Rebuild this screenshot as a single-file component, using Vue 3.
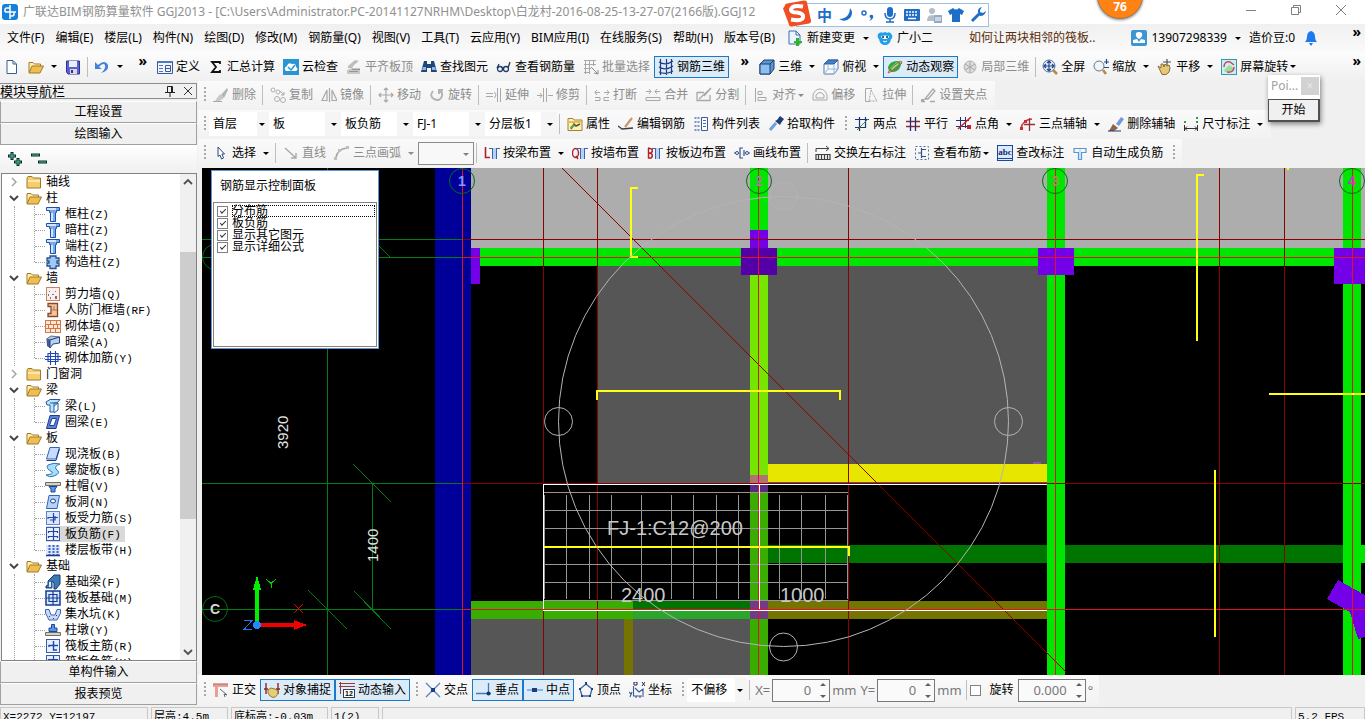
<template>
  <div class="app">
    <header class="titlebar">
      <svg class="icon" viewBox="0 0 16 16" v-html="icons.logo"></svg>
      <span class="title">广联达BIM钢筋算量软件 GGJ2013 - [C:\Users\Administrator.PC-20141127NRHM\Desktop\白龙村-2016-08-25-13-27-07(2166版).GGJ12</span>
      <div class="win-buttons">
        <button v-for="w in windowButtons" :key="w.icon" :aria-label="w.name">
          <svg class="icon" viewBox="0 0 16 16" v-html="icons[w.icon]"></svg>
        </button>
      </div>
    </header>

    <nav class="menubar">
      <div class="menus">
        <button v-for="m in menus" :key="m">{{ m }}</button>
      </div>
      <button class="tool">
        <svg class="icon" viewBox="0 0 16 16" v-html="icons.newChange"></svg>新建变更<i class="caret"></i>
      </button>
      <button class="tool">
        <svg class="icon" viewBox="0 0 16 16" v-html="icons.mascot"></svg>广小二
      </button>
      <a class="tip" href="#">如何让两块相邻的筏板..</a>
      <button class="tool">
        <svg class="icon" viewBox="0 0 16 16" v-html="icons.user"></svg>13907298339<i class="caret"></i>
      </button>
      <button class="tool">造价豆:0</button>
      <button class="tool" aria-label="通知">
        <svg class="icon" viewBox="0 0 16 16" v-html="icons.bell"></svg>
      </button>
      <button class="more last">»</button>
    </nav>

    <div class="toolbar">
      <template v-for="(t, n) in mainTools" :key="n">
        <i v-if="t.type === 'sep'" class="sep"></i>
        <button v-else-if="t.type === 'more'" class="more">»</button>
        <button v-else class="tool" :class="{ on: t.on, off: t.off }" :aria-label="t.name">
          <svg class="icon" viewBox="0 0 16 16" v-html="icons[t.icon]"></svg>
          <span v-if="t.text">{{ t.text }}</span>
          <i v-if="t.caret" class="caret" :class="t.caret"></i>
        </button>
      </template>
      <button class="more last">»</button>
    </div>

    <div class="body">
      <aside class="side">
        <div class="side-title">
          <span>模块导航栏</span>
          <button aria-label="固定"><svg class="icon" viewBox="0 0 16 16" v-html="icons.pin"></svg></button>
          <button aria-label="关闭"><svg class="icon" viewBox="0 0 16 16" v-html="icons.x"></svg></button>
        </div>
        <button class="side-btn">工程设置</button>
        <button class="side-btn">绘图输入</button>
        <div class="side-tools">
          <button aria-label="展开"><svg class="icon" viewBox="0 0 16 16" v-html="icons.expandAll"></svg></button>
          <button aria-label="折叠"><svg class="icon" viewBox="0 0 16 16" v-html="icons.collapseAll"></svg></button>
        </div>
        <div class="tree-box">
          <ul class="tree">
            <li v-for="g in tree" :key="g.name">
              <div class="node">
                <svg class="expander" viewBox="0 0 16 16">
                  <path v-if="g.items" d="M4 6l4 4 4-4" fill="none" stroke="#404040" stroke-width="1.8" />
                  <path v-else d="M6 4l4 4-4 4" fill="none" stroke="#a0a0a0" stroke-width="1.4" />
                </svg>
                <svg class="icon" viewBox="0 0 16 16" v-html="g.items ? icons.folderOpen : icons.folder"></svg>
                <span>{{ g.name }}</span>
              </div>
              <ul v-if="g.items" class="children">
                <li v-for="c in g.items" :key="c[0] + c[1]" class="node" :class="{ selected: c[0] === current }" @click="current = c[0]">
                  <svg class="icon" viewBox="0 0 16 16" v-html="icons[c[2]]"></svg>
                  <span>{{ c[0] }}<span class="key">({{ c[1] }})</span></span>
                </li>
              </ul>
            </li>
          </ul>
          <div class="scrollbar">
            <svg class="icon" viewBox="0 0 16 16"><path d="M4 10l4-4 4 4" fill="none" stroke="#505050" stroke-width="1.8" /></svg>
            <div class="track"><div class="thumb"></div></div>
            <svg class="icon" viewBox="0 0 16 16"><path d="M4 6l4 4 4-4" fill="none" stroke="#505050" stroke-width="1.8" /></svg>
          </div>
        </div>
        <button class="side-btn">单构件输入</button>
        <button class="side-btn">报表预览</button>
      </aside>

      <section class="work">
        <div v-for="(row, r) in rows" :key="r" class="row">
          <div class="strip">
            <template v-for="(t, n) in row" :key="n">
              <i v-if="t.type === 'sep'" class="sep"></i>
              <i v-else-if="t.type === 'grip'" class="grip"></i>
              <label v-else-if="t.type === 'select'" class="combo" :class="t.size">
                <select :aria-label="t.name"><option>{{ t.text }}</option></select>
              </label>
              <button v-else class="tool" :class="{ on: t.on, off: t.off }">
                <svg class="icon" viewBox="0 0 16 16" v-html="icons[t.icon]"></svg>
                <span>{{ t.text }}</span>
                <i v-if="t.caret" class="caret" :class="t.caret"></i>
              </button>
            </template>
          </div>
        </div>

        <div class="canvas">
          <svg class="drawing" viewBox="202 168 1163 507" preserveAspectRatio="xMinYMin slice">
            <rect v-for="(b, n) in blocks" :key="'b' + n" :x="b[0]" :y="b[1]" :width="b[2] - b[0]" :height="b[3] - b[1]" :fill="b[4]" />
            <path d="M1338 580L1365 595V637L1358 639 1350 612 1327 599Z" fill="#7300e6" />
            <!-- axis grid -->
            <path class="axis-green" d="M202 239.500H462M202 257.500H462M202 483.500H462M202 609.500H462M327.500 168V675M372.500 483V609M353 464L391 502M308 590L347 629M354 591L391 629M372 239L391 258" />
            <path class="axis-dark" d="M462 239.500H1365M462 483.500H1365M543.500 168V675M597.500 168V675M848.500 168V675M1219.500 168V675M1284.500 168V675M562 168L1066 672" />
            <path class="axis-red" d="M462 257.500H1365M462 609.500H1365M462.500 168V675M758.500 168V675M1055.500 168V675M1352.500 168V675" />
            <!-- rebar mesh -->
            <path d="M544 492.500H848" stroke="#a58c8c" />
            <path :d="meshPath" stroke="#969696" fill="none" />
            <path d="M543.500 609V484.500H1047M543 610.500H1047M759.500 484V609" stroke="#fff" fill="none" />
            <path class="rebar" d="M638 188H631V257H638M597 400V391H840V400M1204 175H1197V341M1269 394H1365M1215 470V637M544 547H849V556M1288 168V170" />
            <!-- orbit control -->
            <g class="orbit">
              <circle cx="783.500" cy="421.500" r="225" />
              <circle cx="783.500" cy="196" r="14" />
              <circle cx="783.500" cy="647" r="14" />
              <circle cx="558.500" cy="421.500" r="14" />
              <circle cx="1008.500" cy="421.500" r="14" />
            </g>
            <g class="bubble">
              <circle v-for="b in bubbles" :key="b.x + '-' + b.y" :cx="b.x" :cy="b.y" r="12.500" />
            </g>
            <text v-for="b in bubbles" :key="'t' + b.x + '-' + b.y" class="bubble-text" :x="b.x" :y="b.y + 5" :fill="b.fill">{{ b.text }}</text>
            <g class="cad-text">
              <text x="607" y="535">FJ-1:C12@200</text>
              <text x="621" y="602">2400</text>
              <text x="780" y="602">1000</text>
              <text class="dim" transform="translate(288 449) rotate(-90)">3920</text>
              <text class="dim" transform="translate(378 562) rotate(-90)">1400</text>
            </g>
            <!-- coordinate axes -->
            <path d="M255 622V590H253L257 575 261 590H259V622Z" fill="#00f000" />
            <path d="M260 623H294V620L307 625 294 630V627H260Z" fill="#f00000" />
            <circle cx="257" cy="625" r="4" fill="#1e8cff" />
            <path d="M266 579L271 583.500 276 579M271 583.500V588" stroke="#00d000" fill="none" />
            <path d="M294 604L303 613M303 604L294 613" stroke="#f00000" />
            <path d="M244 620.500H252L244 629.500H252" stroke="#1e78f0" fill="none" />
          </svg>

          <div class="rebar-panel">
            <h2>钢筋显示控制面板</h2>
            <div class="checks">
              <label v-for="c in checks" :key="c.text" :class="{ focus: c.focus }">
                <input v-model="c.value" type="checkbox" /><span>{{ c.text }}</span>
              </label>
            </div>
          </div>
        </div>

        <div class="row snap">
          <div class="strip">
            <template v-for="(t, n) in snaps" :key="n">
              <i v-if="t.type === 'grip'" class="grip"></i>
              <button v-else class="tool" :class="{ on: t.on }">
                <svg class="icon" viewBox="0 0 16 16" v-html="icons[t.icon]"></svg>
                <span>{{ t.text }}</span>
              </button>
            </template>
            <i class="grip"></i>
            <label class="combo small"><select aria-label="偏移方式"><option>不偏移</option></select></label>
            <i class="sep"></i>
            <label class="num"><span>X=</span><input v-model="offsetX" type="text" /><i class="spin"></i><span>mm</span></label>
            <label class="num"><span>Y=</span><input v-model="offsetY" type="text" /><i class="spin"></i><span>mm</span></label>
            <i class="sep"></i>
            <label class="rotate"><input v-model="rotate" type="checkbox" />旋转</label>
            <label class="num wide"><input v-model="angle" type="text" aria-label="旋转角度" /><i class="spin"></i><span>°</span></label>
          </div>
        </div>
      </section>
    </div>

    <footer class="status">
      <span class="c1">X=2272 Y=12197</span>
      <span class="c2">层高:4.5m</span>
      <span class="c3">底标高:-0.03m</span>
      <span class="c4">1(2)</span>
      <span class="fill"></span>
      <span class="c3">5.2 FPS</span>
    </footer>

    <!-- input method bar -->
    <div class="ime">
      <svg class="sogou" viewBox="0 0 28 26">
        <path d="M2 5Q2 3 4 3L21 0Q24 0 24 2L28 20Q28 23 26 23L9 26Q6 26 6 24L0 8Z" fill="#f04e23" />
        <path d="M20 6Q9 4 8 9Q8 12 14 12Q21 13 20 17Q19 21 8 19" fill="none" stroke="#fff" stroke-width="4" />
      </svg>
      <span class="zh">中</span>
      <svg v-for="i in imeIcons" :key="i" class="icon" viewBox="0 0 16 16" v-html="icons[i]"></svg>
    </div>
    <div class="ball">76</div>
    <div class="poi">
      <div class="poi-title"><span>Poi...</span><button aria-label="关闭">×</button></div>
      <button class="poi-btn">开始</button>
    </div>
  </div>
</template>

<script setup>
import { ref } from 'vue'

const current = ref('板负筋')
const offsetX = ref('0')
const offsetY = ref('0')
const angle = ref('0.000')
const rotate = ref(false)

const menus = ['文件(F)', '编辑(E)', '楼层(L)', '构件(N)', '绘图(D)', '修改(M)', '钢筋量(Q)', '视图(V)', '工具(T)', '云应用(Y)', 'BIM应用(I)', '在线服务(S)', '帮助(H)', '版本号(B)']

const windowButtons = [
  { icon: 'min', name: '最小化' },
  { icon: 'restore', name: '还原' },
  { icon: 'x2', name: '关闭' }
]

const imeIcons = ['moon', 'punct', 'mic', 'keyboard', 'people', 'shirt', 'wrench']

const sep = { type: 'sep' }
const grip = { type: 'grip' }

const mainTools = [
  { icon: 'file', name: '新建' },
  { icon: 'folderOpen', name: '打开', caret: 'normal' },
  { icon: 'save', name: '保存' },
  sep,
  { icon: 'undo', name: '撤销', caret: 'normal' },
  { type: 'more' },
  { icon: 'define', text: '定义' },
  { icon: 'sigma', text: '汇总计算' },
  { icon: 'cloud', text: '云检查' },
  { icon: 'alignTop', text: '平齐板顶', off: true },
  { icon: 'binocular', text: '查找图元' },
  { icon: 'glasses', text: '查看钢筋量' },
  { icon: 'batch', text: '批量选择', off: true },
  { icon: 'mesh', text: '钢筋三维', on: true },
  { type: 'more' },
  { icon: 'cube', text: '三维', caret: 'normal' },
  { icon: 'cubeTop', text: '俯视', caret: 'normal' },
  { icon: 'orbit', text: '动态观察', on: true },
  { icon: 'local3d', text: '局部三维', off: true },
  sep,
  { icon: 'full', text: '全屏' },
  { icon: 'zoom', text: '缩放', caret: 'normal' },
  { icon: 'pan', text: '平移', caret: 'normal' },
  { icon: 'screenRotate', text: '屏幕旋转', caret: 'tight' }
]

const rows = [
  [
    grip,
    { icon: 'erase', text: '删除', off: true }, sep,
    { icon: 'copy', text: '复制', off: true },
    { icon: 'mirror', text: '镜像', off: true }, sep,
    { icon: 'move', text: '移动', off: true },
    { icon: 'rotate', text: '旋转', off: true }, sep,
    { icon: 'extend', text: '延伸', off: true },
    { icon: 'trim', text: '修剪', off: true }, sep,
    { icon: 'break', text: '打断', off: true },
    { icon: 'merge', text: '合并', off: true },
    { icon: 'split', text: '分割', off: true }, sep,
    { icon: 'align', text: '对齐', off: true, caret: 'tight' },
    { icon: 'offset', text: '偏移', off: true },
    { icon: 'stretch', text: '拉伸', off: true }, sep,
    { icon: 'gripPoint', text: '设置夹点', off: true }
  ],
  [
    grip,
    { type: 'select', text: '首层', name: '楼层', size: 'small' },
    { type: 'select', text: '板', name: '构件类型' },
    { type: 'select', text: '板负筋', name: '构件' },
    { type: 'select', text: 'FJ-1', name: '构件名称' },
    { type: 'select', text: '分层板1', name: '分层' },
    sep,
    { icon: 'props', text: '属性' },
    { icon: 'editBar', text: '编辑钢筋' },
    { icon: 'list', text: '构件列表' },
    { icon: 'picker', text: '拾取构件' },
    grip,
    { icon: 'twoPoint', text: '两点' },
    { icon: 'parallel', text: '平行' },
    { icon: 'pointAngle', text: '点角', caret: 'normal' },
    { icon: 'threeAxis', text: '三点辅轴', caret: 'normal' },
    { icon: 'delAxis', text: '删除辅轴' },
    { icon: 'dimension', text: '尺寸标注', caret: 'normal' }
  ],
  [
    grip,
    { icon: 'cursor', text: '选择', caret: 'normal' }, sep,
    { icon: 'line', text: '直线', off: true },
    { icon: 'arc', text: '三点画弧', off: true, caret: 'normal' },
    { type: 'select', text: '', name: '参数', size: 'boxed' }, sep,
    { icon: 'byBeam', text: '按梁布置', caret: 'normal' },
    { icon: 'byWall', text: '按墙布置' },
    { icon: 'bySlab', text: '按板边布置' },
    { icon: 'byLine', text: '画线布置' }, sep,
    { icon: 'swap', text: '交换左右标注' },
    { icon: 'viewBar', text: '查看布筋', caret: 'tight' },
    { icon: 'abc', text: '查改标注' },
    { icon: 'auto', text: '自动生成负筋' },
    grip
  ]
]

const snaps = [
  grip,
  { icon: 'ortho', text: '正交' },
  { icon: 'osnap', text: '对象捕捉', on: true },
  { icon: 'dyn', text: '动态输入', on: true },
  grip,
  { icon: 'cross', text: '交点' },
  { icon: 'perp', text: '垂点', on: true },
  { icon: 'mid', text: '中点', on: true },
  { icon: 'vertex', text: '顶点' },
  { icon: 'coord', text: '坐标' }
]

const tree = [
  { name: '轴线' },
  { name: '柱', items: [['框柱', 'Z', 'column'], ['暗柱', 'Z', 'column'], ['端柱', 'Z', 'column'], ['构造柱', 'Z', 'gzColumn']] },
  { name: '墙', items: [['剪力墙', 'Q', 'shearWall'], ['人防门框墙', 'RF', 'doorWall'], ['砌体墙', 'Q', 'brick'], ['暗梁', 'A', 'hiddenBeam'], ['砌体加筋', 'Y', 'wallBar']] },
  { name: '门窗洞' },
  { name: '梁', items: [['梁', 'L', 'beam'], ['圈梁', 'E', 'ringBeam']] },
  { name: '板', items: [['现浇板', 'B', 'slab'], ['螺旋板', 'B', 'spiral'], ['柱帽', 'V', 'cap'], ['板洞', 'N', 'hole'], ['板受力筋', 'S', 'slabBar'], ['板负筋', 'F', 'negBar'], ['楼层板带', 'H', 'band']] },
  { name: '基础', items: [['基础梁', 'F', 'baseBeam'], ['筏板基础', 'M', 'raft'], ['集水坑', 'K', 'pit'], ['柱墩', 'Y', 'pier'], ['筏板主筋', 'R', 'raftBar'], ['筏板负筋', 'X', 'negBar']] }
]

const checks = ref([
  { text: '分布筋', value: true, focus: true },
  { text: '板负筋', value: true },
  { text: '显示其它图元', value: true },
  { text: '显示详细公式', value: true }
])

// x1, y1, x2, y2, colour
const blocks = [
  [435, 168, 471, 675, '#000098'],
  [471, 168, 1365, 248, '#adadad'],
  [598, 266, 1047, 484, '#565656'],
  [471, 619, 750, 675, '#565656'],
  [471, 248, 1365, 266, '#00e600'],
  [471, 248, 480, 284, '#7300e6'],
  [768, 464, 1047, 482, '#e6e600'],
  [768, 545, 1365, 563, '#007400'],
  [1361, 545, 1365, 563, '#00e600'],
  [471, 601, 633, 619, '#3aae00'],
  [633, 601, 750, 610, '#007400'],
  [633, 610, 750, 619, '#2ca52c'],
  [624, 619, 633, 675, '#757400'],
  [768, 601, 1047, 619, '#757400'],
  [750, 168, 768, 248, '#00e600'],
  [750, 275, 768, 475, '#74e600'],
  [750, 475, 768, 483, '#b07272'],
  [750, 483, 768, 492, '#5a2a85'],
  [750, 492, 768, 675, '#3aae00'],
  [750, 601, 768, 619, '#733a85'],
  [750, 230, 768, 248, '#7300e6'],
  [741, 248, 777, 275, '#5500a6'],
  [1033, 462, 1041, 464, '#9050b0'],
  [1047, 168, 1065, 675, '#00e600'],
  [1343, 168, 1361, 675, '#00e600'],
  [1038, 248, 1074, 275, '#7300e6'],
  [1334, 248, 1365, 284, '#7300e6']
]

const meshPath =
  [510, 528, 564, 582, 600].map((y) => `M544 ${y + 0.5}H848`).join('') +
  [544, 566, 589, 611, 641, 671, 693, 716, 738, 779, 801, 825, 847].map((x) => `M${x + 0.5} 495V599`).join('')

const bubbles = [
  { x: 215, y: 609, text: 'C', fill: '#d8d8d8' },
  { x: 215, y: 257, text: '', fill: '#fff' },
  { x: 462, y: 181, text: '1', fill: '#8c96ff' },
  { x: 759, y: 181, text: '2', fill: '#8c8c8c' },
  { x: 1055, y: 181, text: '3', fill: '#a08c5a' },
  { x: 1352, y: 181, text: '4', fill: '#c83cb4' }
]

const stroke = (d, color = '#1e4696', w = 1) => `<path d="${d}" fill="none" stroke="${color}" stroke-width="${w}"/>`
const fill = (d, color) => `<path d="${d}" fill="${color}"/>`
const gray = '#a8a8a8'
const barT = stroke('M5 3.500H16M8.500 3V14M12.500 3V14', '#3c64aa') + fill('M9 3h3v11H9z', '#b4d2f5')

const icons = {
  logo: '<rect width="16" height="16" rx="3" fill="#1482dc"/>' + stroke('M8 1V15M3 8H14M8 4H5Q3 4 3 6V8M8 12H10Q12 12 12 10V8', '#fff', 1.5),
  min: stroke('M3 8.500H13', '#808080'),
  restore: stroke('M3.500 5.500H10.500V12.500H3.500ZM5.500 5V3.500H12.500V10.500H11', '#808080'),
  x2: stroke('M3 3L13 13M13 3L3 13', '#808080'),
  x: stroke('M4 4L12 12M12 4L4 12', '#303030'),
  pin: stroke('M5.500 3.500H10.500V9.500H5.500ZM3 9.500H13M8 10V14', '#202020') + fill('M9 4h1v5H9z', '#202020'),
  newChange: '<path d="M2 1H9L13 5V14H2Z" fill="#e8f4ff" stroke="#3c6eaa"/>' + stroke('M9 1V5H13', '#3c6eaa') + fill('M9 8h3v3h3v2h-3v3H9v-3H7v-2h2z', '#32b428'),
  mascot: '<path d="M1 4Q4 1 6 3Q8 1 10 3Q13 1 15 5Q16 8 14 9Q13 15 8 15Q3 15 2 9Q0 8 1 4Z" fill="#1ea0eb"/><path d="M4 6Q8 5 12 6Q12 9 8 9Q4 9 4 6Z" fill="#fff"/><circle cx="6" cy="7" r="1" fill="#123"/><circle cx="10" cy="7" r="1" fill="#123"/>' + stroke('M6 11Q8 13 10 11', '#fff'),
  user: '<rect width="16" height="16" rx="2" fill="#3c96d2"/>' + fill('M5 3Q8 1 11 3Q12 7 8 9Q4 7 5 3ZM2 10L6 9 8 12 10 9 14 10V13H2Z', '#fff'),
  bell: fill('M8 1Q12 2 12 7Q12 10 14 12H2Q4 10 4 7Q4 2 8 1ZM6 13H10L8 16Z', '#1e78f0'),
  file: '<path d="M3 1.500H9L12.500 5V14.500H3Z" fill="#fff" stroke="#3c5a96"/>' + stroke('M9 2V5H12', '#3c5a96'),
  folder: '<path d="M1 4L2 2.500H6L7.500 4H14.500V14H1Z" fill="#f5cd6e" stroke="#a0782d"/>' + fill('M2 6h12v2H2z', '#ffe9a8'),
  folderOpen: '<path d="M1 13.500V3.500H5L6.500 5H12.500V7" fill="#fff0a0" stroke="#a0782d"/><path d="M1 14L4 7H15.500L12 14Z" fill="#f0be50" stroke="#a0782d"/>',
  save: '<path d="M1.500 2H14.500V15H3L1.500 13Z" fill="#5a5fd2" stroke="#32328c"/><path d="M4 2h8v6H4z" fill="#e6f0ff"/><path d="M5 10h7v5H5z" fill="#d8d8e8"/>' + fill('M6 11h2v3H6z', '#32328c'),
  undo: fill('M1 3V10H8L5 8Q9 3 11 6Q12 10 7 14Q15 12 14 6Q11 0 4 6Z', '#4182dc'),
  define: '<path d="M.5 2.500H15.500V14.500H.5Z" fill="#f0f5ff" stroke="#3c5a96"/>' + fill('M1 2h14v2H1z', '#5078be') + stroke('M2 6.500H6M2 9.500H6M2 12.500H6', '#5078be') + stroke('M8.500 6.500H13.500V12.500H8.500ZM9 9.500H13', '#3c5a96'),
  sigma: stroke('M12 5V3H4L8 8 4 13H12V11', '#111', 1.8),
  cloud: '<rect width="16" height="16" fill="#2896d2"/>' + fill('M3 12Q0 9 4 7Q5 3 9 5Q13 4 13 8Q16 10 13 12Z', '#fff') + stroke('M5 8L8 11 12 6', '#2896d2', 1.5),
  alignTop: fill('M2 7L9 1 13 2 8 6 6 9H2Z', '#bebebe') + fill('M1 11L6 9H14V15H1Z', '#c8c8c8') + stroke('M3 12.500H12M6 10.500H14', '#969696'),
  binocular: fill('M3 2H6V5H10V2H13L16 13H10V9H6V13H0Z', '#1e4678') + fill('M2 8h3v3H1zM11 8h3l1 3h-4z', '#8cb4e6'),
  glasses: '<circle cx="4" cy="10" r="2.500" fill="none" stroke="#1e3c6e" stroke-width="1.300"/><circle cx="10" cy="10" r="2.500" fill="none" stroke="#1e3c6e" stroke-width="1.300"/>' + stroke('M6 9H8M12 9L14 3M1 9L3 5', '#1e3c6e', 1.3),
  batch: stroke('M1 1.500H13M1 5.500H13M1 9.500H8M1 13.500H7M2.500 1V15M6.500 1V15M10.500 1V7', gray) + stroke('M8 8L15 15M11 14L15 15V11', '#8c8c8c'),
  mesh: stroke('M1 3Q8 7 15 2M1 8Q8 12 15 7M1 13Q8 16 15 12M2.500 0V16M8.500 0V16M13.500 0V15', '#1e3c82', 1.2),
  cube: '<path d="M1 5L5 1H15V10L11 15H1Z" fill="#5a96d2" stroke="#1e3c6e"/><path d="M1 5H11V15H1Z" fill="#8cbef0" stroke="#1e3c6e"/>' + stroke('M11 5L15 1', '#1e3c6e'),
  cubeTop: '<path d="M1 5L5 1H15V10L11 15H1Z" fill="#f5faff" stroke="#5a78aa"/><path d="M1 5L5 1H15L11 5Z" fill="#3c82d2" stroke="#3c5a8c"/>' + stroke('M11 5V15M1 15L5 10H15M5 5V10', '#96b4dc'),
  orbit: '<path d="M1 8Q3 2 10 2Q14 2 14 6Q12 13 6 13Q1 13 1 8Z" fill="#28aa46"/><path d="M3 9L10 3 12 5 5 11Z" fill="#8ce682"/>' + stroke('M1 14Q3 8 14 2L15 4Q9 12 1 14', '#d2503c', 1),
  local3d: '<circle cx="8" cy="8" r="6" fill="#dcdcdc" stroke="#b4b4b4"/>' + stroke('M3 5L13 11M13 5L3 11M8 2V14', '#a8a8a8'),
  full: '<circle cx="7" cy="7" r="6" fill="#e6f0fa" stroke="#5a7396"/>' + stroke('M7 2V12M2 7H12M5 4L7 2 9 4M5 10L7 12 9 10M4 5L2 7 4 9M10 5L12 7 10 9', '#1e468c', 1.2) + stroke('M11 11L15 15', '#b48c3c', 2.5),
  zoom: '<circle cx="6" cy="7" r="5" fill="#f0f5fa" stroke="#64788c"/>' + stroke('M10 11L13 15', '#b48c3c', 2.5) + stroke('M11 3H16M13.500 0V5M11 8.500H16', '#1e468c', 1.2),
  pan: stroke('M10 0V7M6 3H14', '#46505a', 1.2) + '<path d="M1 7L4 9 4 5 6 5 7 8 8 5 10 7 12 6 13 9Q13 14 9 15.500H5Z" fill="#e6c878" stroke="#8c6e32"/>',
  screenRotate: '<rect x=".5" y=".5" width="15" height="15" fill="#c8f0f5" stroke="#3c96aa"/><path d="M3 11L8 6 13 9 11 13H4Z" fill="#a0dc96"/>' + stroke('M3 8Q3 2 9 3L13 6M13 8Q13 14 6 13', '#d24664', 1.5),
  erase: fill('M8 8L14 1 15 3 11 11Z', '#b4b4b4') + fill('M7 7L11 11 6 14H2Z', '#c8c8c8') + stroke('M0 14.500H9', gray),
  copy: '<g fill="none" stroke="#b0b0b0"><circle cx="3" cy="3" r="2"/><circle cx="8" cy="5" r="2"/><circle cx="7" cy="12" r="2.500"/><circle cx="13" cy="13" r="2.500"/></g>' + stroke('M10 4L14 8M14 5V8H11', gray),
  mirror: stroke('M1 13.500L6 3V13.500ZM8.500 1V15M11 13.500V3L16 13.500Z', gray, 1.2),
  move: stroke('M8 1V15M1 8H15M6 3L8 1 10 3M6 13L8 15 10 13M3 6L1 8 3 10M13 6L15 8 13 10', gray, 1.2),
  rotate: stroke('M4 4Q0 9 5 12Q11 15 13 9Q14 5 10 3M10 7V3H14', '#b4b4b4', 2),
  extend: stroke('M0 6.500H7M0 9.500H7M8.500 5L10 8 8.500 11', gray) + stroke('M11.500 1V15M14.500 1V15', gray),
  trim: stroke('M0 8.500H5M11 8.500H16M3 6L5 8.500 3 11M6.500 1V15M9.500 1V15', gray),
  break: stroke('M1 5.500H6M10 5.500H15M3 3L1 5.500 3 8M13 3L15 5.500 13 8M1 10.500H6V13.500H1M15 10.500H10V13.500H15', gray),
  merge: stroke('M1 4.500H6M10 4.500H15M4 2L6 4.500 4 7M12 2L10 4.500 12 7M1 10.500H15V13.500H1Z', gray),
  split: stroke('M1 5.500H8M1 5V13.500H14V8M3 12L14 2M8 9L15 1', gray, 1.3),
  align: stroke('M2.500 1V15M5 4.500H9V7.500H5ZM5 10.500H13V13.500H5Z', gray),
  offset: stroke('M1 13V8Q3 2 8 2Q13 2 15 8V13ZM4 11V8Q8 3 12 8V11Z', gray),
  stretch: stroke('M9 1.500H2.500V14.500H7', gray) + '<path d="M8 3L14 14H6Z" fill="none" stroke="#a8a8a8" stroke-dasharray="2 1"/>',
  gripPoint: stroke('M1 14.500H5M10 14.500H15M5 12L13 2 15 4 8 12Z', gray, 1.3) + fill('M1 12h3v3H1z', gray),
  props: '<path d="M1 2.500H6L7 4H15V14.500H1Z" fill="#fff0b4" stroke="#a0823c"/>' + fill('M1 5h14v2H1z', '#e6be50') + stroke('M4 13L7 8 9 10 13 8', '#50503c', 1.5) + fill('M3 11l4-3 1 2-4 3z', '#64a050'),
  editBar: stroke('M0 10L4 13 15 12', '#323c50', 1.3) + stroke('M7 11L14 2', '#c8966e', 2.2),
  list: '<path d="M2.500 1V15M5.500 1V15" stroke="#7896c8" stroke-width="2" stroke-dasharray="2 2"/><path d="M8.500 1.500H14.500V14.500H8.500Z" fill="#fff" stroke="#3c5a96"/>' + stroke('M10 4.500H13M10 7.500H13M10 10.500H13', '#3c6ebe'),
  picker: stroke('M2 14L8 7', '#6ea0dc', 3) + fill('M7 5L9 4 12 0 16 3 13 7 12 9Z', '#1e3c78'),
  twoPoint: stroke('M1 3.500H15M1 11.500H12M5.500 1V15M11.500 1V12', '#1e3278', 1.2) + stroke('M3 14L14 3', '#329632'),
  parallel: stroke('M1 5.500H15M1 10.500H15', '#962832', 1.3) + stroke('M5.500 1V15M10.500 1V15', '#1e3278', 1.3),
  pointAngle: stroke('M0 4.500H13M0 10.500H11M4.500 1V14M9.500 1V12', '#1e3278') + stroke('M2 13L15 1', '#c81e28', 1.4) + fill('M11 9h4v4h-4z', '#c81e28'),
  threeAxis: stroke('M1 13Q2 4 12 3', '#c83c3c', 1.5) + stroke('M4 8.500H15M9.500 2V15', '#96323c', 1.3) + fill('M0 11h3v3H0zM4 4h3v3H4z', '#d2282d'),
  delAxis: fill('M8 8L13 1 16 3 11 10Z', '#7896dc') + fill('M5 8L10 12 6 15H1Z', '#8c6446') + stroke('M0 15H13', '#1e3278'),
  dimension: stroke('M1.500 9V15M14.500 9V15M2 12.500H14M4 10.500L2 12.500 4 14.500M12 10.500L14 12.500 12 14.500', '#323232') + fill('M1 5h2v2H1zM13 1h2v2h-2zM13 5h2v2h-2z', '#32a046'),
  cursor: '<path d="M5 2L11.500 9H9L10.500 13 8.500 14 7 10 5 11.500Z" fill="#fff" stroke="#32467d"/>',
  line: stroke('M2 3L13 13M8 13H13V8', gray, 1.4),
  arc: stroke('M2 13Q3 4 13 3', gray, 1.6) + fill('M0 12h3v3H0zM4 4h3v3H4zM12 1h3v3h-3z', '#bebebe'),
  byBeam: stroke('M1.500 2V12.500H6', '#b41e28', 1.6) + barT,
  byWall: '<ellipse cx="3.500" cy="8" rx="3" ry="4.500" fill="none" stroke="#b41e28" stroke-width="1.400"/>' + stroke('M4 11L6 14', '#b41e28', 1.4) + barT,
  bySlab: stroke('M1.500 3V13H4Q6 12 5 9L2 8H4Q6 7 5 4L1 3', '#b41e28', 1.4) + barT,
  byLine: stroke('M0 8H5M11 8H16M8 3H6V13H8M8 3H9M10 5V11M8 13H9', '#32508c', 1.2) + '<circle cx="3" cy="8" r="1.500" fill="#fff" stroke="#32508c"/><circle cx="13" cy="8" r="1.500" fill="#fff" stroke="#32508c"/>',
  swap: stroke('M1 7V3.500H13M11 1L14 3.500 11 6', '#404040') + stroke('M1 9.500H15V14.500H1ZM3.500 10V14M6.500 10V14M9.500 10V14M12.500 10V14', '#404040', 1.2),
  viewBar: '<path d="M1.500 1.500H14.500V14.500H1.500Z" fill="none" stroke="#506ea0" stroke-dasharray="2 2"/>' + stroke('M4 8H7M7.500 3V13M7 4.500H12M7 11.500H12', '#32508c', 1.2),
  abc: '<rect x=".5" y=".5" width="15" height="15" fill="#dceaff" stroke="#1e46a0"/><text x="8" y="10" font-size="9" font-family="Liberation Serif" font-weight="bold" fill="#142864" text-anchor="middle">abc</text>' + stroke('M1 13.500H15', '#1e46a0'),
  auto: stroke('M2 3.500H14M2 3V7.500H6.500V14.500H9.500V7.500H14V3', '#5a96d2', 1.2) + fill('M7 4h2v10H7z', '#c8e1ff'),
  ortho: fill('M0 2H15V5H5V15H2V5H0Z', '#e6a096') + '<path d="M7 7L14 13 11 12 12 15" fill="#fff" stroke="#5a6478"/>' + stroke('M0 2H15', '#b45a50'),
  osnap: stroke('M2 1V12M14 1V12M0 7H4M12 7H16', '#8c2828', 1.4) + '<path d="M4 8L7 6 11 7 14 9Q14 15 9 15.500Q6 15 4 11Z" fill="#e6cd78" stroke="#967832"/>',
  dyn: stroke('M0 1.500H16M0 4.500H16M1.500 0V12', '#963c3c') + '<rect x="4.500" y="7.500" width="11" height="8" fill="#fff" stroke="#323c50"/><text x="10" y="14" font-size="7" font-weight="bold" font-family="Liberation Sans" fill="#000" text-anchor="middle">12</text>',
  cross: stroke('M1 1L15 15M15 1L1 15', '#5a82be', 1.3) + fill('M6 6h4v4H6z', '#1e3c8c'),
  perp: stroke('M0 11.500H15M12.500 1V12', '#3c78c8', 1.3) + '<circle cx="12.500" cy="11.500" r="2" fill="#1e3264"/>',
  mid: stroke('M0 8H16', '#5a96dc', 1.3) + fill('M5 6h5v4H5z', '#1e3c78'),
  vertex: '<path d="M8 2L14 7 12 14H4L2 7Z" fill="none" stroke="#3c64aa" stroke-width="1.300"/>' + fill('M7 0h2v3H7zM13 6h2v2h-2zM1 6h2v2H1zM3 13h2v2H3zM11 13h2v2h-2z', '#1e3c8c'),
  coord: stroke('M4.500 4V14H15M6 6L10 10 14 7V13M0 10L2 12M3 10L1 15M7 14V16M11 14V16', '#3c5a96', 1.1) + stroke('M5 0H8V3H5ZM13 0L16 4M16 0L13 4', '#1e2850'),
  expandAll: stroke('M1 5H9M5 1V9M7 11H15M11 7V15', '#0a2828', 3) + stroke('M2 5H8M5 2V8M8 11H14M11 8V14', '#50c8a0', 1),
  collapseAll: stroke('M0 4H9M7 11H16', '#0a2828', 3) + stroke('M1 4H8M8 11H15', '#50c8a0', 1),
  column: '<path d="M1.500 1.500H14.500V4.500H11.500V6.500H10.500V15.500H5.500V6.500H4.500V4.500H1.500Z" fill="#78aaeb" stroke="#1e50aa"/>' + fill('M2 2h9v2H2zM6 7h2v8H6z', '#d2e6ff'),
  gzColumn: '<path d="M5 2H11V4H14V7H12V9H14V12H11V14.500H5V12H2V9H4V7H2V4H5Z" fill="#a0c8f5" stroke="#28508c" stroke-width="1.300"/>',
  shearWall: '<rect x="1.500" y="1.500" width="13" height="13" fill="#faf0eb" stroke="#c88264"/>' + fill('M4 5h1v1H4zM7 8h2v1H7zM10 5h1v1h-1zM5 11h1v2H5zM10 10h2v3h-2zM3 8h1v2H3z', '#786e96'),
  doorWall: '<path d="M3 1.500H12.500V14.500H3V11.500H6V4.500H3Z" fill="#f0c8a0" stroke="#8c4628" stroke-width="1.300"/>' + stroke('M6 8H12M9 4V8', '#b46e46'),
  brick: '<rect x=".5" y="2.500" width="15" height="12" fill="#ffe6d7" stroke="#d27846"/>' + stroke('M1 6.500H15M1 10.500H15M5.500 3V6M11.500 3V6M3.500 7V10M8.500 7V10M12.500 7V10M5.500 11V14M10.500 11V14', '#d27846'),
  hiddenBeam: '<path d="M1.500 5L6 2 14.500 3 6 6Z" fill="#b4c8e6" stroke="#5a6e8c"/><path d="M1.500 5L5 6V14L2 12Z" fill="#3c5a96"/><path d="M5 6L14.500 3V9L8 10 5 14Z" fill="#b4d2f5" stroke="#28467d"/>',
  wallBar: stroke('M3 3.500H13V11.500H3ZM0 6.500H16M0 9.500H16M5.500 1V15M10.500 1V15', '#1e46b4', 1.1),
  beam: '<path d="M1 4L5 1.500H15L12 5H9V14H5V7H2Z" fill="#b4e6ff" stroke="#285aa0"/>' + stroke('M9 8L13 5V12L9 15M5 5H12', '#285aa0'),
  ringBeam: '<path d="M5 1.500H14.500L11 14.500H1.500Z" fill="#5a82dc" stroke="#1e3c96"/><path d="M7 4.500H11.500L9 11.500H4.500Z" fill="#fff" stroke="#1e3c96"/>',
  slab: '<path d="M5 1.500H14.500L11 13H1.500Z" fill="#c8dcff" stroke="#3264b4"/>' + stroke('M1.500 14.500H11L14.500 3', '#1e3c8c'),
  spiral: '<path d="M3 3Q9 0 15 2Q9 4 11 7Q17 11 9 14Q4 16 1 13Q9 12 7 10Q0 6 3 3Z" fill="#aadcfa" stroke="#2878b4"/>',
  cap: '<path d="M.5 4.500H15.500V7.500H.5Z" fill="#d2d2c8" stroke="#6e6e64"/><path d="M4 8.500H12L10 11V14H6V11Z" fill="#5a96e6" stroke="#1e4696"/>',
  hole: '<path d="M4 1.500H14.500L12 14.500H1.500Z" fill="#b4d2fa" stroke="#3264b4"/><ellipse cx="8" cy="7" rx="2.500" ry="2" fill="#fff" stroke="#1e3c8c"/>',
  slabBar: '<rect x="1.500" y="1.500" width="13" height="13" fill="#dce6ff" stroke="#6482c8"/>' + stroke('M3 9V7.500H13M8.500 3V13M5 10H10V6', '#1e46b4', 1.2),
  negBar: '<rect x="1.500" y="1.500" width="13" height="13" fill="#e6f0ff" stroke="#3c5aaa"/>' + stroke('M3 5.500H13M3 10.500H13M8.500 2V14M3.500 5V7M12.500 5V7M3.500 10V12M12.500 10V12', '#1e46aa', 1.2),
  band: fill('M1 3h14v10H1z', '#dce6ff') + '<path d="M4.500 3V13M8.500 3V13M12.500 3V13" stroke="#3c64c8" stroke-width="2" stroke-dasharray="2 1"/>' + stroke('M1 13.500H15', '#1e3c8c', 1.6),
  baseBeam: '<path d="M3 7L9 1H15V10L11 15H9V9L7 7V14H1V12L3 11Z" fill="#3c78b4" stroke="#143c6e"/>' + fill('M4 8h2v5H4z', '#dcebff'),
  raft: '<rect x="1" y="1" width="14" height="14" fill="#dceaff" stroke="#143c96" stroke-width="1.500"/>' + stroke('M4 4.500H12V11.500H4ZM1 8H15M8 1V15', '#143c96', 1.2),
  pit: '<path d="M.5 3.500H4L6 9H10L12 3.500H15.500V7L12 14H4L.5 7Z" fill="#c8dcfa" stroke="#3c64b4"/>' + fill('M4 10h1v1H4zM8 12h1v1H8zM11 9h1v1h-1z', '#1e3c8c'),
  pier: '<path d="M.5 10.500H15.500V13.500H.5Z" fill="#d2d2c8" stroke="#6e6e64"/><path d="M6.500 2.500H9.500V6H12V9.500H4V6H6.500Z" fill="#5a96e6" stroke="#1e4696"/>',
  raftBar: '<rect x="1.500" y="1.500" width="13" height="13" fill="#e6f0ff" stroke="#3c5aaa"/>' + stroke('M4 9V7.500H13M8.500 3V12H12', '#1e46aa', 1.4),
  moon: fill('M12 1Q16 6 12 11Q7 16 1 12Q7 12 10 8Q12 5 12 1Z', '#1e6ec8'),
  punct: '<circle cx="4" cy="6" r="2" fill="none" stroke="#1e6ec8" stroke-width="1.500"/>' + fill('M10 8Q14 7 13 11Q12 13 9 14Q11 12 11 11Q9 11 10 8Z', '#1e6ec8'),
  mic: '<rect x="5" y="0" width="6" height="10" rx="3" fill="#1e6ec8"/>' + stroke('M3 6Q3 12 8 12Q13 12 13 6M8 12V15M4 15H12', '#1e6ec8', 1.5),
  keyboard: '<rect y="2" width="16" height="12" rx="1" fill="#1e6ec8"/><path d="M2 5H14M2 8H14" stroke="#fff" stroke-width="1.500" stroke-dasharray="2 1"/>' + stroke('M4 11.500H12', '#fff', 1.5),
  people: '<circle cx="6" cy="4" r="3" fill="#b4bec8"/>' + fill('M1 14Q1 8 6 8Q10 8 11 14Z', '#b4bec8') + '<rect x="8" y="8" width="8" height="8" fill="#96aac8"/>' + stroke('M10 10V14M12 10V14M14 10V14', '#fff'),
  shirt: fill('M5 1Q8 4 11 1L16 4 14 8 12 7V15H4V7L2 8 0 4Z', '#1e6ec8'),
  wrench: stroke('M2 14L9 7', '#1e6ec8', 3) + fill('M12 0Q7 1 8 6L10 9Q15 9 16 4L13 6 10 5 10 3Z', '#1e6ec8')
}
</script>

<style>
html,
body {
  margin: 0;
  background: #f0f0f0;
}
</style>

<style scoped>
.app {
  position: relative;
  display: flex;
  flex-direction: column;
  height: 100vh;
  overflow: hidden;
  background: #f0f0f0;
  color: #000;
  font-family: "Noto Sans", "Noto Sans CJK SC", sans-serif;
  font-size: 12px;
  line-height: 16px;
  white-space: nowrap;
}

button,
input,
select {
  margin: 0;
  padding: 0;
  border: 0;
  background: none;
  color: inherit;
  font: inherit;
}

.icon {
  flex: none;
  width: 16px;
  height: 16px;
}

.titlebar {
  display: flex;
  align-items: center;
  gap: 5px;
  flex: none;
  height: 24px;
  padding-left: 2px;
  background: #fff;
  color: #909090;
}

.title {
  flex: 1;
  overflow: hidden;
}

.win-buttons {
  display: flex;
  gap: 29px;
  padding: 0 16px 4px 0;
}

.win-buttons button {
  height: 16px;
}

.menubar,
.toolbar {
  display: flex;
  align-items: center;
  flex: none;
}

.menubar {
  height: 28px;
  background: linear-gradient(#f0f0f0, #fafafa);
}

.menus {
  display: flex;
  gap: 11px;
  padding: 0 8px 0 7px;
}

.tip {
  padding: 0 32px;
  color: #5a2d0a;
  text-decoration: none;
}

.toolbar {
  height: 29px;
  background: linear-gradient(#fcfcfc, #f0f0f0);
}

.tool {
  display: flex;
  align-items: center;
  gap: 3px;
  height: 22px;
  padding: 0 3px;
  border: 1px solid transparent;
}

.menubar .tool {
  gap: 4px;
}

.tool.on {
  border-color: #1e78c8;
  background: #dcebf8;
}

.tool.off {
  color: #8c8c8c;
}

.caret {
  border: 3px solid transparent;
  border-top-color: currentColor;
  border-bottom: 0;
  margin-left: 4px;
}

.caret.tight {
  margin-left: -1px;
}

.more {
  width: 26px;
  padding: 0 6px 12px 0;
  font-size: 14px;
  font-weight: bold;
  text-align: right;
}

.more.last {
  margin-left: auto;
  padding-right: 4px;
}

.sep {
  flex: none;
  width: 1px;
  height: 20px;
  margin: 0 2px;
  background: #bebebe;
}

.grip {
  flex: none;
  width: 2px;
  height: 16px;
  margin: 0 3px 0 6px;
  background: repeating-linear-gradient(#a8a8a8 0 2px, transparent 2px 4px);
}

.body {
  display: flex;
  flex: 1;
  min-height: 0;
}

/* navigation panel */
.side {
  display: flex;
  flex-direction: column;
  flex: none;
  width: 198px;
  box-sizing: border-box;
  padding: 2px 1px 2px 0;
}

.side-title {
  display: flex;
  align-items: center;
  gap: 2px;
  height: 14px;
  margin-bottom: 2px;
  border: 1px solid #8c8c8c;
  border-left: 0;
}

.side-title span {
  flex: 1;
  font-size: 13px;
}

.side-title button {
  height: 16px;
}

.side-btn {
  flex: none;
  height: 22px;
  border: 1px solid #a0a0a0;
  border-top-color: #fff;
  background: #f0f0f0;
}

.side-tools {
  display: flex;
  gap: 8px;
  flex: none;
  height: 28px;
  padding: 0 7px;
  align-items: center;
  background: linear-gradient(#fff, #f0f0f0);
}

.side-tools button {
  height: 16px;
}

.tree-box {
  display: flex;
  flex: 1;
  min-height: 0;
  margin-left: 1px;
  overflow: hidden;
  border: 1px solid #828282;
  background: #fff;
}

.tree {
  flex: 1;
  margin: 0;
  padding: 0 0 0 4px;
  list-style: none;
}

.node {
  display: flex;
  align-items: center;
  gap: 4px;
  height: 16px;
}

.expander {
  width: 16px;
  height: 16px;
}

.children {
  position: relative;
  margin: 0 0 0 8px;
  padding: 0 0 0 31px;
  border-left: 1px dotted #a0a0a0;
  list-style: none;
}

.children::before {
  content: "";
  position: absolute;
  top: 0;
  bottom: 8px;
  left: 19px;
  border-left: 1px dotted #a0a0a0;
}

.children .node {
  width: max-content;
  padding-right: 4px;
}

.children .node::before {
  content: "";
  width: 10px;
  margin: 0 -4px 0 -11px;
  border-top: 1px dotted #a0a0a0;
}

.children .node.selected {
  background: #d9d9d9;
}

.key {
  font-family: "Liberation Mono", monospace;
  font-size: 11px;
}

.scrollbar {
  display: flex;
  flex-direction: column;
  align-items: center;
  width: 16px;
  background: #f0f0f0;
}

.track {
  flex: 1;
  width: 100%;
  padding-top: 62px;
}

.thumb {
  height: 68%;
  background: #cdcdcd;
}

/* drawing area */
.work {
  display: flex;
  flex-direction: column;
  flex: 1;
  min-width: 0;
}

.row {
  display: flex;
  flex: none;
}

.row .sep {
  margin-right: 3px;
}

.strip {
  display: flex;
  align-items: center;
  height: 28px;
  padding-right: 4px;
  border-bottom: 1px solid #f0f0f0;
  background: linear-gradient(#fafafa, #f2f2f2);
}

.combo {
  position: relative;
  display: flex;
  width: 72px;
  height: 24px;
  background: linear-gradient(90deg, #fff 56px, #f5f5f5 56px);
}

.combo.small {
  width: 60px;
  background: linear-gradient(90deg, #fff 48px, #f5f5f5 48px);
}

.combo.boxed {
  width: 56px;
  height: 23px;
  box-sizing: border-box;
  border: 1px solid #8c8c8c;
  background: #f8f8f8;
}

.combo select {
  width: 100%;
  padding-left: 4px;
  appearance: none;
}

.combo::after {
  content: "";
  position: absolute;
  top: 11px;
  right: 4px;
  border: 3px solid transparent;
  border-top-color: #000;
  border-bottom: 0;
  pointer-events: none;
}

.combo.boxed::after {
  top: 10px;
  border-top-color: #808080;
}

.canvas {
  position: relative;
  flex: 1;
  min-height: 0;
  margin-left: 4px;
  overflow: hidden;
  background: #000;
}

.drawing {
  display: block;
  width: 100%;
  height: 100%;
  shape-rendering: crispEdges;
}

.axis-green {
  fill: none;
  stroke: #007d14;
}

.axis-dark {
  fill: none;
  stroke: #8c0000;
}

.axis-red {
  fill: none;
  stroke: #dc1428;
}

.rebar {
  fill: none;
  stroke: #ffff14;
  stroke-width: 2;
}

.orbit {
  fill: none;
  stroke: #b4b4b4;
  shape-rendering: auto;
}

.bubble {
  fill: none;
  stroke: #006e14;
  shape-rendering: auto;
}

.bubble-text {
  font: bold 14px "Liberation Sans", sans-serif;
  text-anchor: middle;
}

.cad-text {
  fill: #c8c8c8;
  font: 20px "Liberation Sans", sans-serif;
}

.dim {
  fill: #e6e6e6;
  font-size: 15px;
}

.rebar-panel {
  position: absolute;
  top: 2px;
  left: 9px;
  display: flex;
  flex-direction: column;
  width: 166px;
  height: 177px;
  border: 1px solid #5a96dc;
  background: #fff;
}

.rebar-panel h2 {
  margin: 0;
  padding: 7px 8px 8px;
  font-size: 12px;
  font-weight: normal;
}

.checks {
  flex: 1;
  margin: 0 1px 1px;
  padding: 2px 1px;
  border: 1px solid #828282;
}

.checks label {
  display: flex;
  align-items: center;
  gap: 4px;
  height: 12px;
  padding-left: 2px;
  line-height: 12px;
}

.checks label span {
  flex: 1;
}

.checks .focus span {
  outline: 1px dotted #000;
  outline-offset: -1px;
}

input[type="checkbox"] {
  display: grid;
  place-items: center;
  width: 11px;
  height: 11px;
  box-sizing: border-box;
  border: 1px solid #828282;
  background: #fff;
  appearance: none;
}

input[type="checkbox"]:checked::before {
  content: "";
  width: 5px;
  height: 2px;
  border: solid #303030;
  border-width: 0 0 1px 1px;
  transform: translateY(-1px) rotate(-45deg);
}

.snap .strip {
  height: 30px;
  padding-bottom: 1px;
}

.num {
  position: relative;
  display: flex;
  align-items: center;
  gap: 2px;
  padding: 0 2px;
  color: #787878;
  font-size: 13px;
}

.num input {
  width: 58px;
  height: 23px;
  box-sizing: border-box;
  padding-right: 18px;
  border: 1px solid #787878;
  background: #fafafa;
  text-align: right;
}

.num.wide input {
  width: 68px;
}

.spin {
  display: flex;
  flex-direction: column;
  justify-content: space-between;
  height: 15px;
  margin: 0 4px 0 -12px;
}

.spin::before,
.spin::after {
  content: "";
  border: 3px solid transparent;
}

.spin::before {
  border-top: 0;
  border-bottom-color: #606060;
}

.spin::after {
  border-bottom: 0;
  border-top-color: #606060;
}

.rotate {
  display: flex;
  align-items: center;
  gap: 9px;
  padding: 0 2px 0 0;
}

.status {
  display: flex;
  gap: 3px;
  flex: none;
  height: 12px;
  overflow: hidden;
  font-family: "Liberation Mono", "Noto Sans CJK SC", monospace;
  font-size: 11px;
}

.status span {
  height: 20px;
  box-sizing: border-box;
  padding: 1px 2px;
  border: 1px solid #c8c8c8;
}

.status .c1 {
  width: 148px;
}

.status .c2 {
  width: 77px;
}

.status .c3 {
  width: 97px;
}

.status .c4 {
  width: 48px;
}

.status .fill {
  flex: 1;
}

.status .c3:last-child {
  width: 70px;
}

/* floating windows */
.ime {
  position: absolute;
  top: 3px;
  left: 796px;
  display: flex;
  align-items: center;
  gap: 6px;
  height: 22px;
  padding: 0 2px 0 20px;
  border: 1px solid #a0c0e0;
  background: #fff;
}

.sogou {
  position: absolute;
  top: -4px;
  left: -14px;
  width: 28px;
  height: 27px;
}

.zh {
  color: #1e6ec8;
  font-size: 15px;
  font-weight: bold;
}

.ball {
  position: absolute;
  top: -27px;
  left: 1097px;
  width: 44px;
  height: 44px;
  border: 1px solid #a07850;
  border-radius: 50%;
  background: #ff8214;
  box-shadow: 0 1px 3px #808080;
  color: #fff;
  font-weight: bold;
  line-height: 66px;
  text-align: center;
}

.poi {
  position: absolute;
  top: 75px;
  left: 1268px;
  display: flex;
  flex-direction: column;
  width: 52px;
  background: #fff;
  box-shadow: 1px 2px 5px #808080;
}

.poi-title {
  display: flex;
  align-items: center;
  justify-content: space-between;
  padding: 2px 1px 4px 3px;
  color: #a0a0a0;
}

.poi-title button {
  width: 18px;
  height: 18px;
  background: #d2d2d2;
  color: #e6e6e6;
}

.poi-btn {
  height: 23px;
  border: 1px solid #505050;
  border-width: 1px 2px 2px 1px;
  background: #f0f0f0;
}
</style>
